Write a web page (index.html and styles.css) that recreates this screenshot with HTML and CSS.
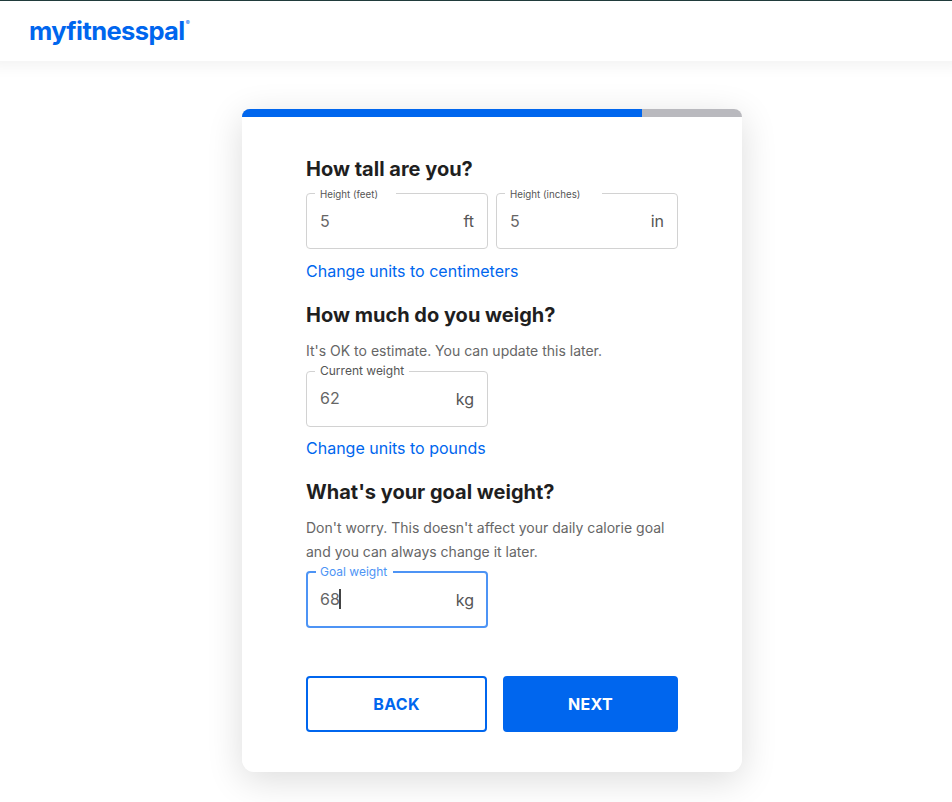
FILE: index.html
```
<!DOCTYPE html>
<html lang="en">
<head>
<meta charset="utf-8">
<title>MyFitnessPal</title>
<link rel="stylesheet" href="styles.css">
</head>
<body>
<header class="header"><span class="logo">myfitnesspal</span><span class="reg">®</span></header>
<main class="card">
  <div class="progress"><div class="progress-fill"></div></div>
  <form class="content">
    <section>
      <h2>How tall are you?</h2>
      <div class="row">
        <div class="field small"><label class="w-feet"><span>Height (feet)</span></label><span class="value">5</span><span class="unit">ft</span></div>
        <div class="field small"><label class="w-inches"><span>Height (inches)</span></label><span class="value">5</span><span class="unit">in</span></div>
      </div>
      <a class="link">Change units to centimeters</a>
    </section>
    <section>
      <h2>How much do you weigh?</h2>
      <p class="hint">It's OK to estimate. You can update this later.</p>
      <div class="field weight"><label class="w-current"><span>Current weight</span></label><span class="value">62</span><span class="unit">kg</span></div>
      <a class="link pounds">Change units to pounds</a>
    </section>
    <section>
      <h2>What's your goal weight?</h2>
      <p class="hint goal-hint">Don't worry. This doesn't affect your daily calorie goal and you can always change it later.</p>
      <div class="field weight focused"><label class="w-goal"><span>Goal weight</span></label><span class="value">68</span><i class="caret"></i><span class="unit">kg</span></div>
    </section>
    <div class="actions">
      <button type="button" class="btn back">BACK</button>
      <button type="button" class="btn next">NEXT</button>
    </div>
  </form>
</main>
</body>
</html>
```
FILE: styles.css
```
* { box-sizing: border-box; }
html { overflow: hidden; }
body {
  margin: 0;
  height: 802px;
  background: #fff;
  font-family: Inter, sans-serif;
  color: #1f1f1f;
}
.header {
  display: flex;
  align-items: flex-start;
  height: 61px;
  padding: 15px 0 0 29px;
  border-top: 1px solid #203b3b;
  box-shadow: 0 -8px 16px 12px rgba(0, 0, 0, .06);
  color: #0066ee;
}
.logo { font-size: 25.5px; line-height: 30px; font-weight: 700; letter-spacing: -.6px; }
.reg { font-size: 6px; line-height: 6px; margin: 4px 0 0 1px; font-weight: 600; }
.card {
  width: 500px;
  height: 663px;
  margin: 48px 0 0 242px;
  border-radius: 8px 8px 12px 12px;
  background: #fff;
  box-shadow: 0 8px 36px rgba(0, 0, 0, .14);
  overflow: hidden;
}
.progress { height: 8px; background: #b9b9be; }
.progress-fill { width: 80%; height: 100%; background: #0066ee; }
.content { padding: 40px 64px; }
h2 { margin: 0 0 12px; font-size: 20px; line-height: 24px; font-weight: 700; }
.row { display: flex; gap: 8px; }
.field {
  position: relative;
  display: flex;
  align-items: center;
  width: 182px;
  height: 56px;
  padding: 0 13px;
  border: 1px solid #d2d2d2;
  border-radius: 4px;
  font-size: 16px;
  line-height: 24px;
  color: #666;
}
.field label {
  position: absolute;
  left: 8px;
  top: -9px;
  height: 16px;
  padding-left: 5px;
  background: linear-gradient(#fff, #fff) 0 8px / 100% 2px no-repeat;
  font-size: 12px;
  line-height: 16px;
  white-space: nowrap;
  color: #555;
}
.field.small label { top: -7px; font-size: 9.75px; background-position: 0 6px; }
.w-feet { width: 81px; }
.w-inches { width: 97px; }
.w-current { width: 94px; }
.w-goal { width: 77px; }
.unit { margin-left: auto; color: #555; }
.weight .value { margin-top: -2px; }
.link { display: block; margin: 10px 0 20px; font-size: 16px; line-height: 24px; color: #0066ee; }
.link.pounds { margin: 9px 0 20px; }
.hint { margin: 0 0 8px; font-size: 14px; line-height: 24px; color: #666; }
.goal-hint { margin-bottom: 7px; }
.focused { height: 57px; padding: 0 12px; border: 2px solid #4d94f5; }
.field.focused label { padding-left: 4px; color: #4d94f5; background-size: 100% 3px; background-position: 0 7px; }
.caret { width: 2px; height: 20px; margin: -2px 0 0 -1px; background: #444; }
.actions { display: flex; gap: 16px; margin-top: 48px; }
.btn {
  height: 56px;
  padding: 0;
  border: 2px solid #0066ee;
  border-radius: 4px;
  font: 700 16px/24px Inter, sans-serif;
  letter-spacing: .3px;
}
.back { width: 181px; background: #fff; color: #0066ee; }
.next { width: 175px; background: #0066ee; color: #fff; }
```
